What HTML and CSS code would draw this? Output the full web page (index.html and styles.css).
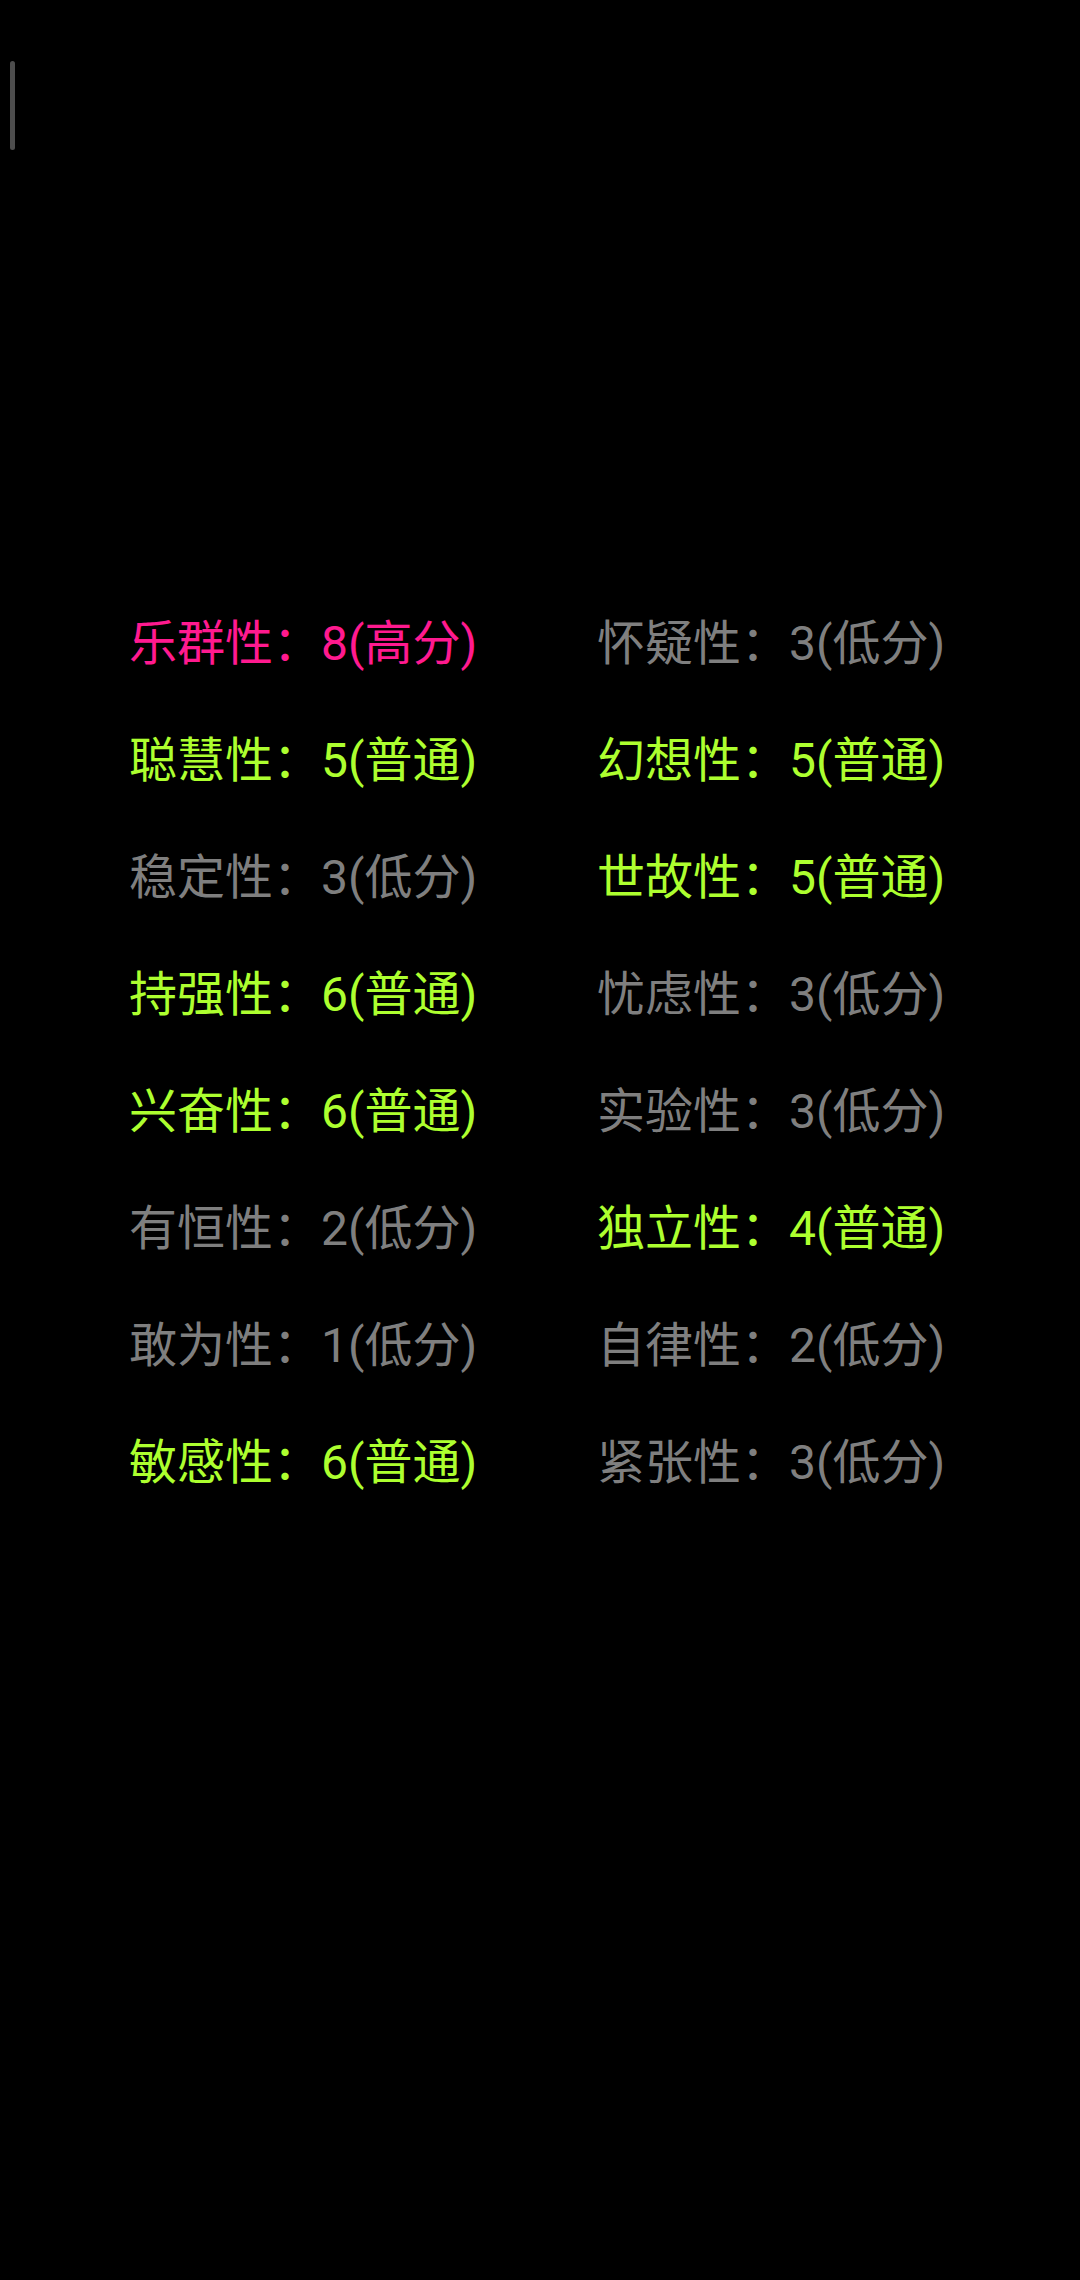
FILE: index.html
```html
<!DOCTYPE html>
<html lang="zh-CN">
<head>
<meta charset="utf-8">
<title>性格因素</title>
<link rel="stylesheet" href="styles.css">
</head>
<body>
<div class="scroll-indicator"></div>
<main class="screen">
  <div class="grid">
    <div class="item high">乐群性：8(高分)</div>
    <div class="item low">怀疑性：3(低分)</div>
    <div class="item mid">聪慧性：5(普通)</div>
    <div class="item mid">幻想性：5(普通)</div>
    <div class="item low">稳定性：3(低分)</div>
    <div class="item mid">世故性：5(普通)</div>
    <div class="item mid">持强性：6(普通)</div>
    <div class="item low">忧虑性：3(低分)</div>
    <div class="item mid">兴奋性：6(普通)</div>
    <div class="item low">实验性：3(低分)</div>
    <div class="item low">有恒性：2(低分)</div>
    <div class="item mid">独立性：4(普通)</div>
    <div class="item low">敢为性：1(低分)</div>
    <div class="item low">自律性：2(低分)</div>
    <div class="item mid">敏感性：6(普通)</div>
    <div class="item low">紧张性：3(低分)</div>
  </div>
</main>
</body>
</html>
```
FILE: styles.css
```css
html, body {
  margin: 0;
  padding: 0;
  background: #000;
}
body {
  width: 1080px;
  height: 2280px;
  position: relative;
  overflow: hidden;
  font-family: Roboto, "Noto Sans CJK SC", sans-serif;
}
.scroll-indicator {
  position: absolute;
  left: 10px;
  top: 61px;
  width: 5px;
  height: 89px;
  border-radius: 3px;
  background: #4d4d4d;
}
.screen {
  padding-top: 585px;
  padding-left: 129px;
}
.grid {
  display: grid;
  grid-template-columns: 468px auto;
}
.item {
  font-size: 48px;
  line-height: 117px;
  height: 117px;
  white-space: nowrap;
}
.high {
  color: #ff1a8f;
}
.mid {
  color: #adff2f;
}
.low {
  color: #7f7f7f;
}
```
